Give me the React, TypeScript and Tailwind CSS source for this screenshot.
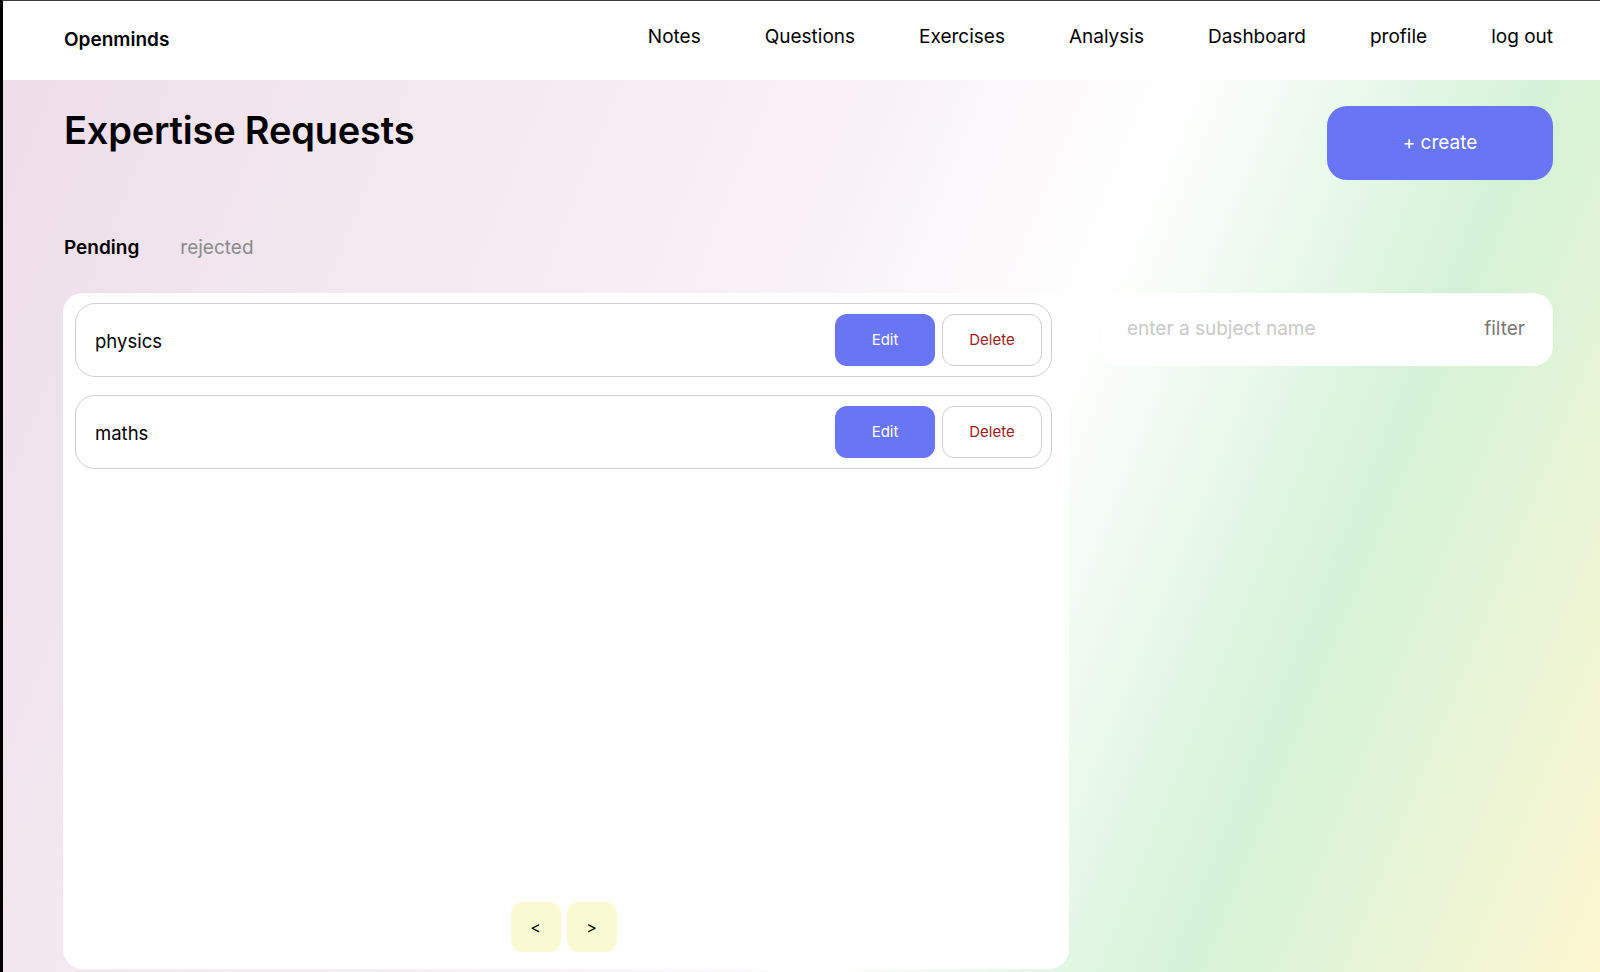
import { useState } from "react";

interface Request {
  id: string;
  subject: string;
}

const requests: Request[] = [
  { id: "r1", subject: "physics" },
  { id: "r2", subject: "maths" },
];

const navLinks = ["Notes", "Questions", "Exercises", "Analysis", "Dashboard", "profile", "log out"];

export default function App() {
  const [tab, setTab] = useState<"pending" | "rejected">("pending");
  const [filter, setFilter] = useState("");

  return (
    <div className="h-screen flex flex-col border-l-[3px] border-t border-l-black border-t-[#3d3d3d] font-['Inter','Noto_Sans',sans-serif] text-black bg-[linear-gradient(112deg,#eddde9_0%,#f4e9f1_25%,#f8f1f6_45%,#ffffff_61%,#d4f2d7_79%,#e8f5d6_89%,#fcf6cf_100%)]">
      {/* Navbar */}
      <nav className="h-[79px] shrink-0 bg-white flex items-center justify-between pl-[61px] pr-[47px] pb-[6px]">
        <span className="text-[19px] font-semibold mt-[5px]">Openminds</span>
        <div className="flex items-center gap-[64px]">
          {navLinks.map((link) => (
            <a key={link} href="#" className="text-[19px] text-black">
              {link}
            </a>
          ))}
        </div>
      </nav>

      {/* Content */}
      <main className="flex-1 flex flex-col pl-[60px] pr-[47px] pb-[3px] min-h-0">
        <div className="flex items-start justify-between pt-[26px]">
          <h1 className="text-[38px] leading-[40px] font-semibold tracking-[-0.2px] pl-px mt-[4px]">Expertise Requests</h1>
          <button className="w-[226px] h-[74px] rounded-[20px] bg-[#6875f5] text-white text-[19px]">
            + create
          </button>
        </div>

        <div className="flex items-center gap-[41px] mt-[54px] h-[28px] pl-px text-[19px]">
          <button
            onClick={() => setTab("pending")}
            className={tab === "pending" ? "font-semibold text-black" : "text-[#8a8a8a]"}
          >
            Pending
          </button>
          <button
            onClick={() => setTab("rejected")}
            className={tab === "rejected" ? "font-semibold text-black" : "text-[#8a8a8a]"}
          >
            rejected
          </button>
        </div>

        <div className="flex-1 flex gap-[32px] mt-[31px] min-h-0">
          {/* Requests list */}
          <section className="w-[1006px] bg-white rounded-[20px] flex flex-col pt-[10px] pl-[12px] pr-[17px] pb-[17px]">
            <div className="flex-1 flex flex-col gap-[18px]">
              {requests.map((req) => (
                <div
                  key={req.id}
                  className="h-[74px] border border-[#cfcfcf] rounded-[20px] flex items-center justify-between pl-[19px] pr-[9px]"
                >
                  <span className="text-[18.5px] mt-[3px]">{req.subject}</span>
                  <div className="flex items-center gap-[7px]">
                    <button className="w-[100px] h-[52px] rounded-[12px] bg-[#6875f5] text-white text-[15px]">
                      Edit
                    </button>
                    <button className="w-[100px] h-[52px] rounded-[12px] border border-[#cfcfcf] bg-white text-[#9b1c1c] text-[15px]">
                      Delete
                    </button>
                  </div>
                </div>
              ))}
            </div>

            {/* Pagination */}
            <div className="flex justify-center gap-[6px]">
              <button className="w-[50px] h-[50px] rounded-[12px] bg-[#fafad2] text-[16px]">&lt;</button>
              <button className="w-[50px] h-[50px] rounded-[12px] bg-[#fafad2] text-[16px]">&gt;</button>
            </div>
          </section>

          {/* Filter */}
          <div className="flex-1 self-start h-[73px] bg-white rounded-[20px] flex items-center pl-[26px] pr-[28px]">
            <input
              value={filter}
              onChange={(e) => setFilter(e.target.value)}
              placeholder="enter a subject name"
              className="flex-1 bg-transparent outline-none text-[19px] placeholder:text-[#c9c9c9]"
            />
            <button className="text-[19px] text-[#777777]">filter</button>
          </div>
        </div>
      </main>
    </div>
  );
}
